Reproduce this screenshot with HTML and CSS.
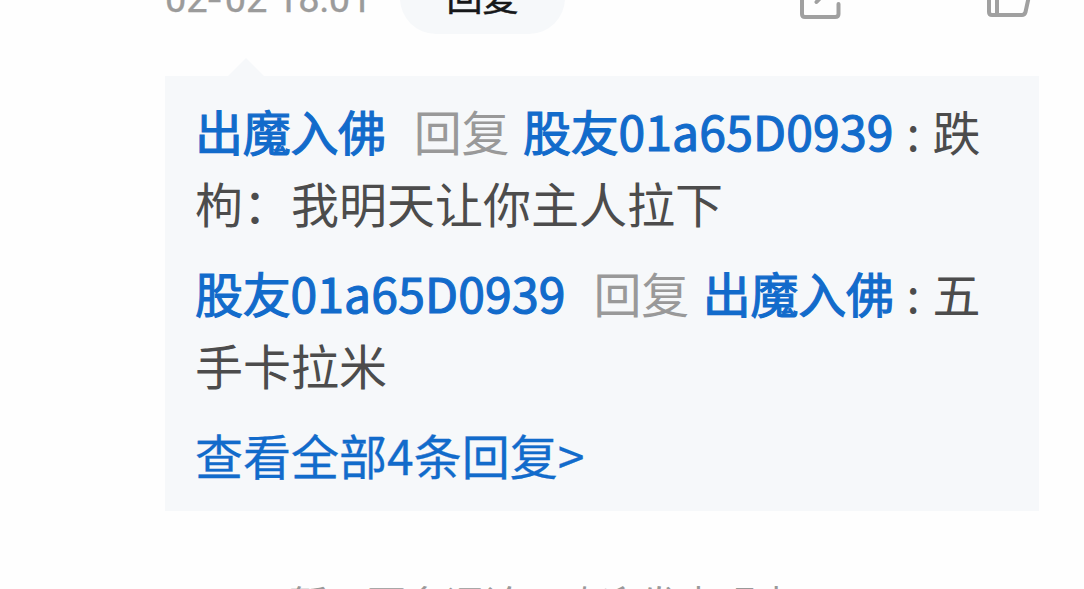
FILE: index.html
```html
<!DOCTYPE html>
<html lang="zh-CN">
<head>
<meta charset="utf-8">
<title>评论回复</title>
<link rel="stylesheet" href="styles.css">
</head>
<body>
<main class="page">
  <header class="meta">
    <time class="time">02<span class="dash">-</span>02 18:01</time>
    <button class="reply-btn">回复</button>
    <div class="actions">
      <svg class="icon" width="44" height="44" viewBox="0 0 44 44" fill="none" stroke="#a0a0a0" stroke-width="4" stroke-linecap="round" stroke-linejoin="round">
        <path d="M20 4H6Q3 4 3 7V38Q3 41 6 41H36Q39.500 41 39.500 38V28M17.500 26L36 6M27 4H39V16"/>
      </svg>
      <svg class="icon" width="46" height="44" viewBox="0 0 46 44" fill="none" stroke="#a0a0a0" stroke-width="4" stroke-linecap="round" stroke-linejoin="round">
        <path d="M13 16H5Q2 16 2 19V36Q2 39 5 39H35Q37.500 39 38.500 36L42 20Q42 16 39 16H27V7Q27 2 22 2L13 16M10 17V38"/>
      </svg>
    </div>
  </header>
  <section class="replies">
    <p class="reply"><span class="line"><a class="user">出魔入佛</a><span class="verb">回复</span><a class="user">股友<span class="id">01a65D0939</span></a><span class="colon">:</span>跌</span><span class="line">枸：我明天让你主人拉下</span></p>
    <p class="reply"><span class="line"><a class="user">股友<span class="id">01a65D0939</span></a><span class="verb">回复</span><a class="user">出魔入佛</a><span class="colon">:</span>五</span><span class="line">手卡拉米</span></p>
    <a class="more">查看全部4条回复&gt;</a>
  </section>
  <footer class="end">暂无更多评论，欢迎发表观点</footer>
</main>
</body>
</html>
```
FILE: styles.css
```css
* { box-sizing: border-box; }
body {
  margin: 0;
  background: #fefefe;
  color: #4c4c4c;
  font-family: "Noto Sans CJK SC", sans-serif;
}
.page { height: 589px; overflow: hidden; }
.meta {
  display: flex;
  align-items: flex-end;
  height: 76px;
  padding: 0 54px 42px 165px;
}
.time {
  flex: none;
  width: 235px;
  margin-bottom: 5px;
  font-family: Roboto, sans-serif;
  font-size: 38px;
  line-height: 60px;
  white-space: nowrap;
  color: #9b9b9b;
  -webkit-text-stroke: .4px #9b9b9b;
}
.dash { display: inline-block; width: 17px; transform: scaleX(1.25); transform-origin: left; }
.reply-btn {
  flex: none;
  width: 165px;
  height: 72px;
  padding: 0 0 6px;
  border: 0;
  border-radius: 36px;
  background: #f6f8fa;
  color: #17181a;
  font: 36px/60px "Noto Sans CJK SC", sans-serif;
  -webkit-text-stroke: .5px #17181a;
}
.actions { display: flex; gap: 144px; margin: 0 0 14px 234px; }
.icon { display: block; flex: none; }
.replies {
  position: relative;
  width: 874px;
  height: 435px;
  margin-left: 165px;
  padding: 18px 30px 0;
  background: #f6f8fa;
  font-size: 48px;
  line-height: 72px;
}
.replies::before {
  content: "";
  position: absolute;
  left: 63px;
  top: -18px;
  border: solid transparent;
  border-width: 0 18px 18px;
  border-bottom-color: #f6f8fa;
}
.reply { margin: 0 0 18px; }
.line { display: block; white-space: nowrap; }
.user { color: #126bcb; -webkit-text-stroke: 1.2px #126bcb; letter-spacing: -.3px; }
.id { letter-spacing: .2px; }
.verb { margin: 0 14px 0 28px; color: #999; letter-spacing: -.4px; }
.colon { display: inline-block; width: 39px; text-align: center; }
.more { display: block; color: #126bcb; -webkit-text-stroke: .3px #126bcb; }
.end {
  margin: 62px 0 0 289px;
  font-size: 39px;
  line-height: 58px;
  white-space: nowrap;
  color: #999;
}
```
